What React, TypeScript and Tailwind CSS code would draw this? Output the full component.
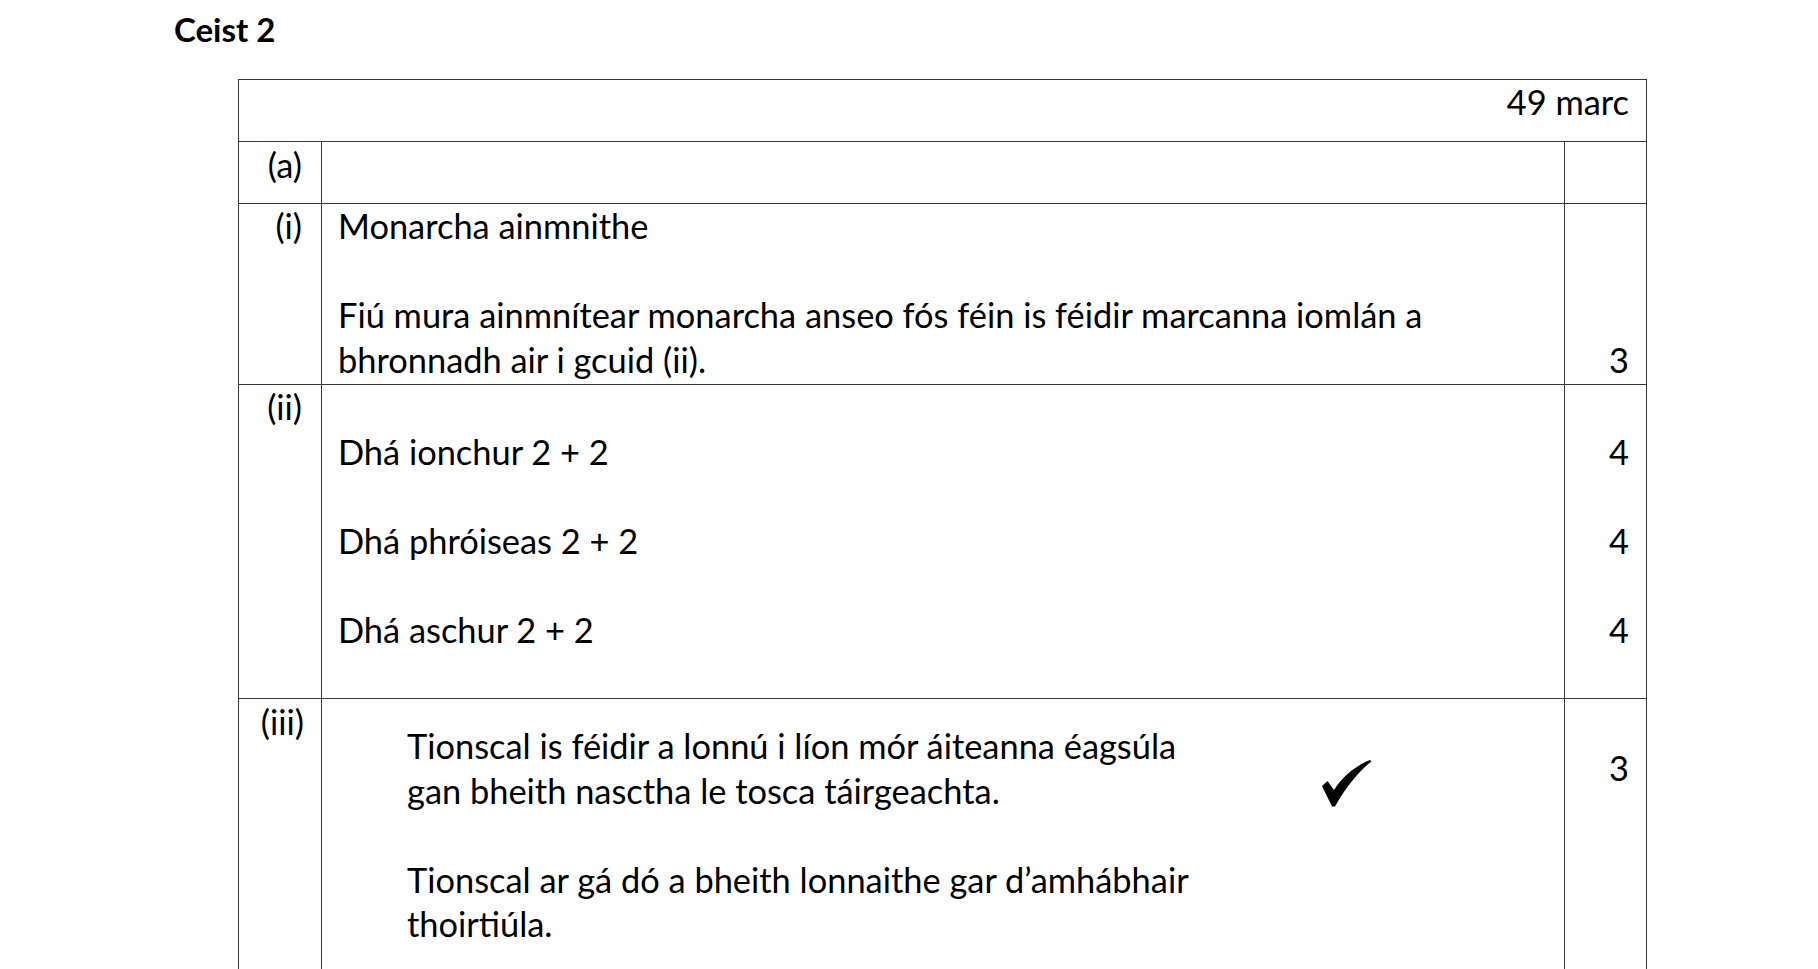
import React from 'react';

const line = 'text-[34.4px] leading-[44.6px] whitespace-pre';

const Lines: React.FC<{ items: string[]; className?: string }> = ({ items, className = '' }) => (
  <div className={className}>
    {items.map((t, i) => (
      <div key={i} className={`${line} h-[44.6px]`}>{t}</div>
    ))}
  </div>
);

const Check = () => (
  <svg width="50" height="47" viewBox="0 0 50 47" className="shrink-0 mt-[36px]">
    <path d="M0,26 L5.5,21 L12,30 C20,17 33,6 48,0 L49.5,1.5 C37,11 24,27 13,46.5 L10,46.5 Z" fill="#000" />
  </svg>
);

export default function App() {
  return (
    <div className="h-[969px] overflow-hidden bg-white text-black font-['Lato','Open_Sans',sans-serif]">
      <div className="pl-[174px] pt-[7px]">
        <h2 className="text-[33px] font-bold leading-[44px]">Ceist 2</h2>
      </div>

      <div className="ml-[238px] mt-[28px] w-[1409px] border border-[#383838]">
        {/* header row */}
        <div className="h-[61px] pt-[0px] pr-[17px] text-right">
          <span className={line}>49 marc</span>
        </div>

        {/* (a) */}
        <div className="grid h-[62px] grid-cols-[82px_1243px_1fr] border-t border-[#383838]">
          <div className={`${line} pt-[1px] pr-[19px] text-right`}>(a)</div>
          <div className="border-l border-[#383838]" />
          <div className="border-l border-[#383838]" />
        </div>

        {/* (i) */}
        <div className="grid h-[181px] grid-cols-[82px_1243px_1fr] border-t border-[#383838]">
          <div className={`${line} pr-[19px] text-right`}>(i)</div>
          <Lines
            className="border-l border-[#383838] pl-[16px]"
            items={[
              'Monarcha ainmnithe',
              '',
              'Fiú mura ainmnítear monarcha anseo fós féin is féidir marcanna iomlán a',
              'bhronnadh air i gcuid (ii).',
            ]}
          />
          <Lines className="border-l border-[#383838] pr-[17px] text-right" items={['', '', '', '3']} />
        </div>

        {/* (ii) */}
        <div className="grid h-[314px] grid-cols-[82px_1243px_1fr] border-t border-[#383838]">
          <div className={`${line} pr-[19px] text-right`}>(ii)</div>
          <Lines
            className="border-l border-[#383838] pl-[16px]"
            items={['', 'Dhá ionchur 2 + 2', '', 'Dhá phróiseas 2 + 2', '', 'Dhá aschur 2 + 2']}
          />
          <Lines className="border-l border-[#383838] pr-[17px] text-right" items={['', '4', '', '4', '', '4']} />
        </div>

        {/* (iii) */}
        <div className="grid h-[320px] grid-cols-[82px_1243px_1fr] border-t border-[#383838]">
          <div className={`${line} pt-[1px] pr-[17px] text-right`}>(iii)</div>
          <div className="flex border-l border-[#383838] pt-[25px] pl-[85px]">
            <Lines
              className="w-[915px] shrink-0"
              items={[
                'Tionscal is féidir a lonnú i líon mór áiteanna éagsúla',
                'gan bheith nasctha le tosca táirgeachta.',
                '',
                'Tionscal ar gá dó a bheith lonnaithe gar d’amhábhair',
                'thoirtiúla.',
              ]}
            />
            <Check />
          </div>
          <div className={`${line} border-l border-[#383838] pt-[47px] pr-[17px] text-right`}>3</div>
        </div>
      </div>
    </div>
  );
}
